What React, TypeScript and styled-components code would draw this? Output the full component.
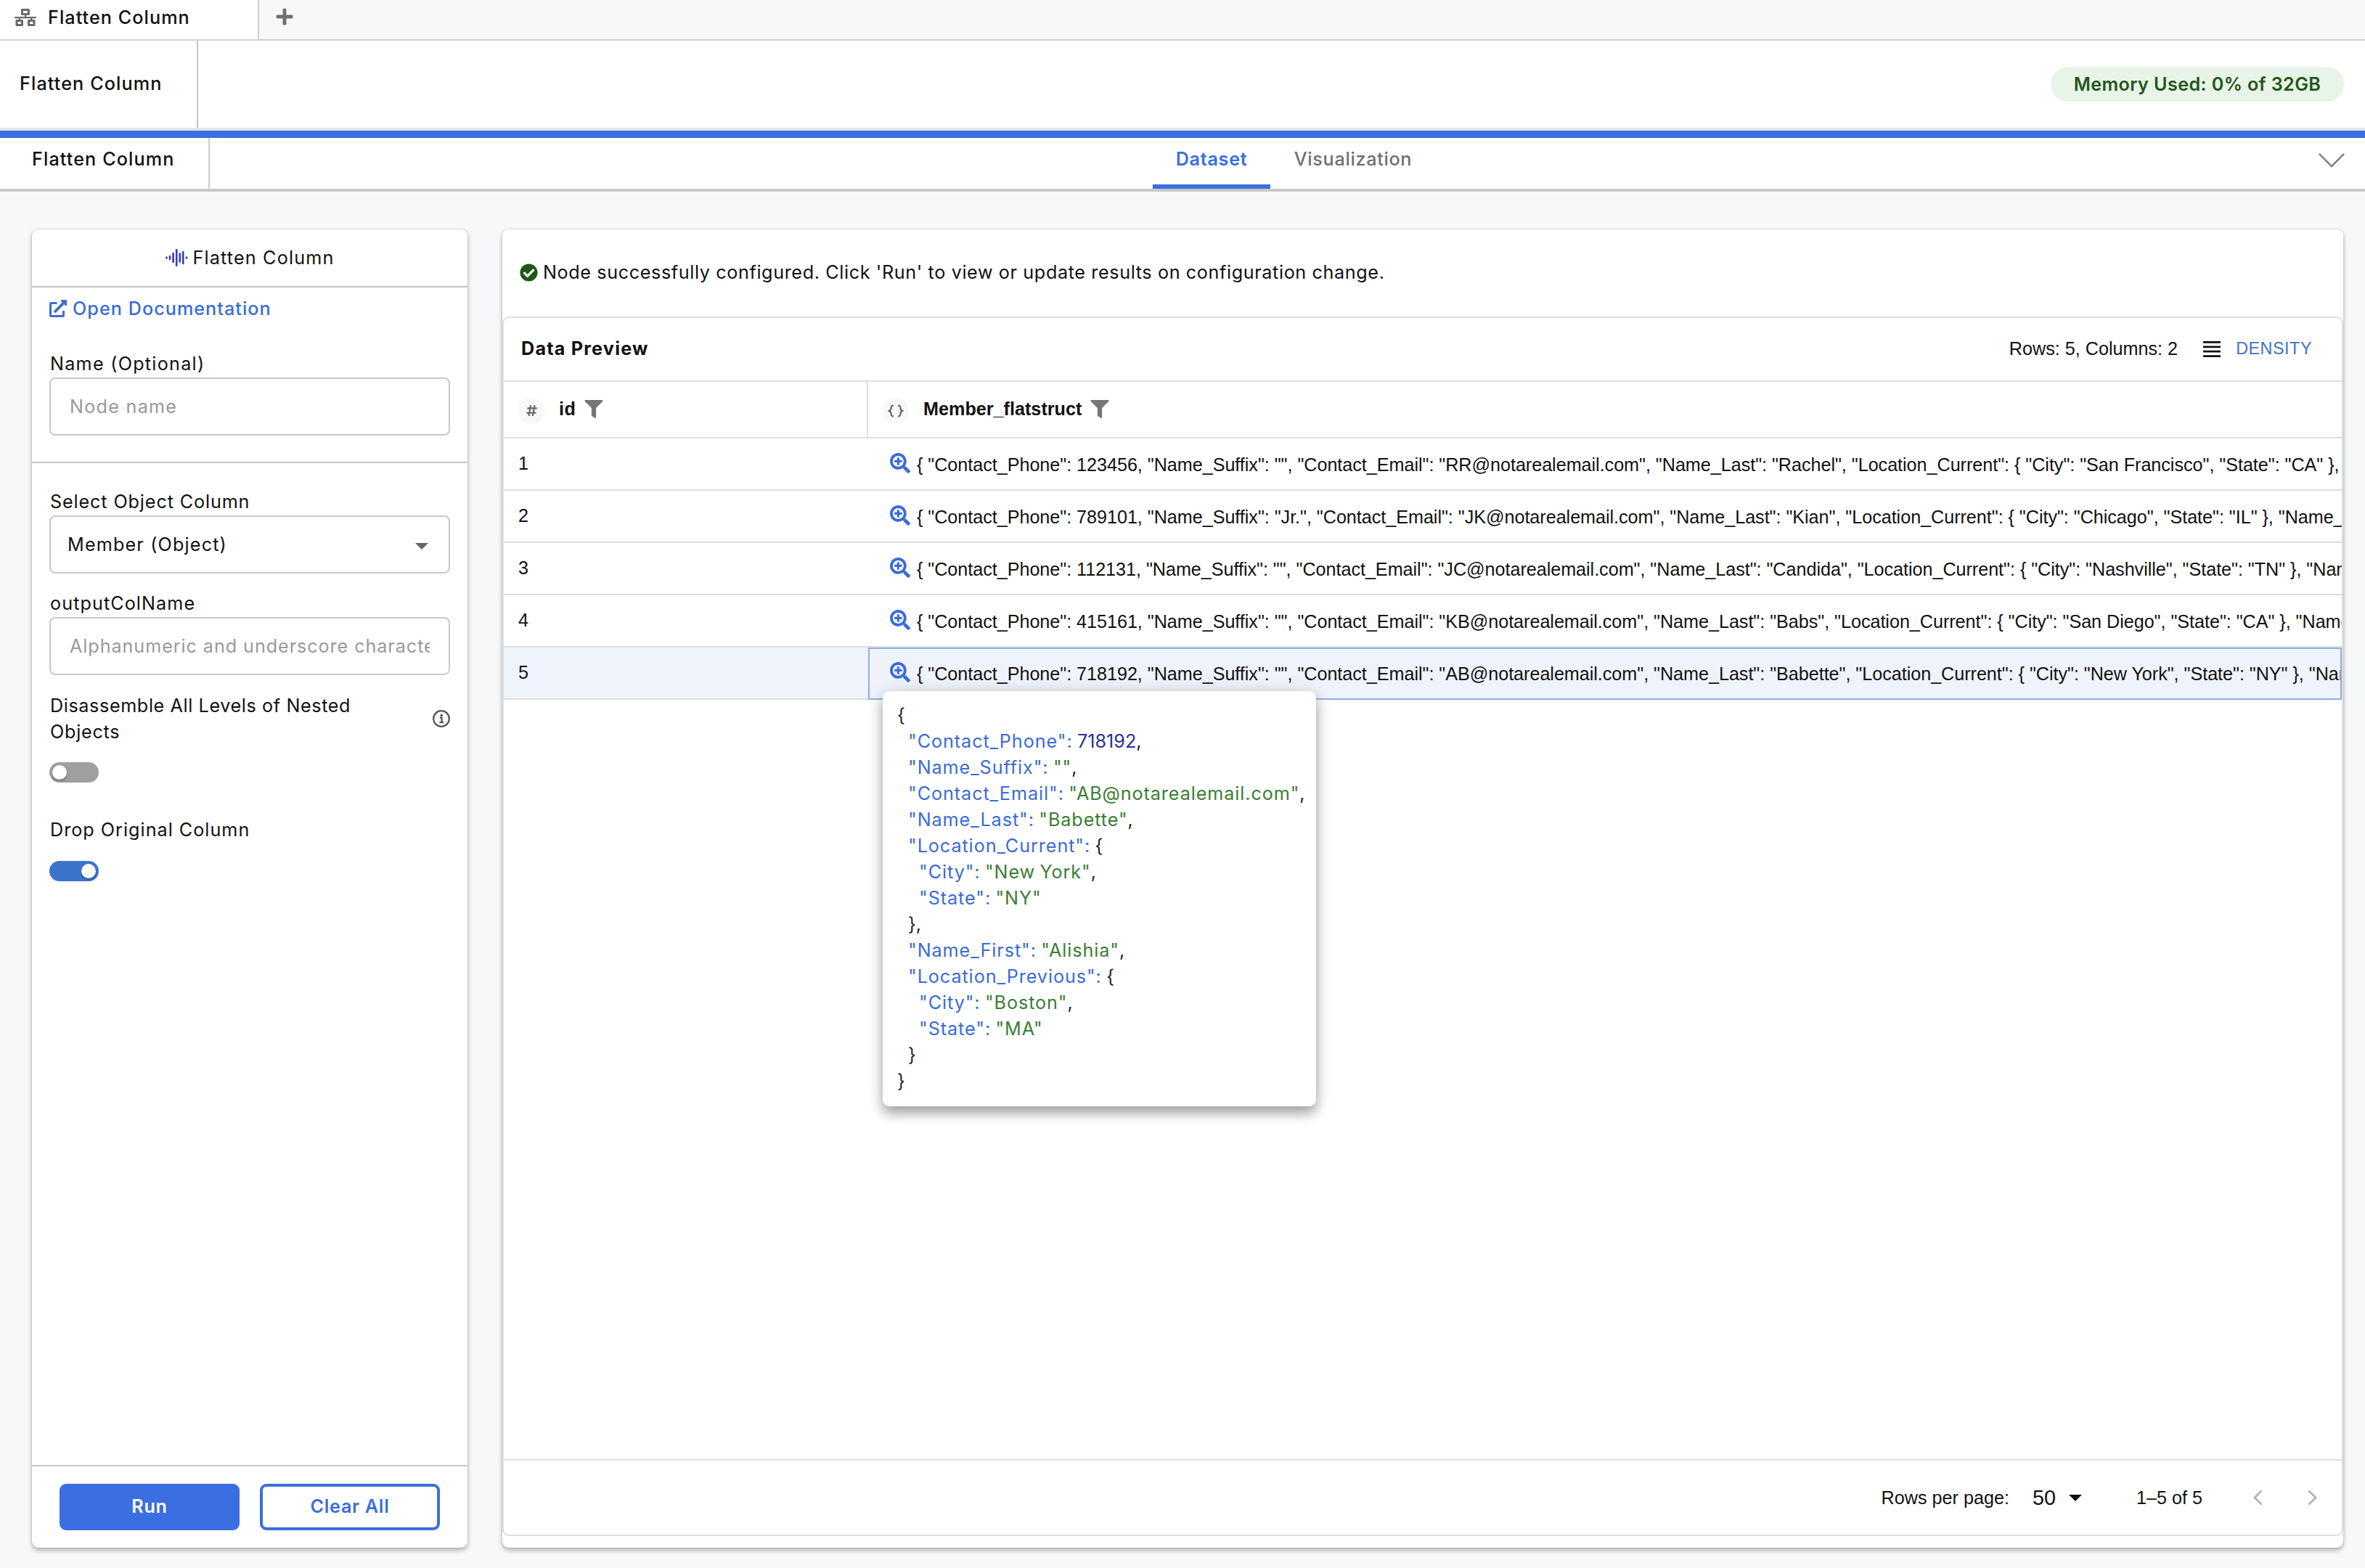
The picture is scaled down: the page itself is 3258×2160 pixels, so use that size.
import React from "react";
import styled, { createGlobalStyle, css } from "styled-components";
import {
  FaCheckCircle,
  FaExternalLinkAlt,
  FaFilter,
  FaHashtag,
  FaNetworkWired,
  FaPlus,
  FaSearchPlus,
} from "react-icons/fa";

const BRAND = "#3b6ee0";
const LINE = "#dedede";
const RULE = "#c4c4c4";

const uiFont = css`
  font-family: Inter, "Open Sans", sans-serif;
`;
const gridFont = css`
  font-family: "Liberation Sans", Arial, sans-serif;
`;

const GlobalStyle = createGlobalStyle`
  *, *::before, *::after { box-sizing: border-box; }
  body {
    margin: 0;
    background: #f6f8fa;
    color: #111;
    font-size: 25.2px;
    line-height: 36px;
    ${uiFont}
  }
`;

const Page = styled.div`
  display: flex;
  flex-direction: column;
  width: 3258px;
  height: 2160px;
  overflow: hidden;
`;

const Text = styled.span<{ $ls?: number; $weight?: number }>`
  font-weight: ${(p) => p.$weight ?? 400};
  letter-spacing: ${(p) => p.$ls ?? 0}px;
  white-space: nowrap;
`;

const WorkspaceTabs = styled.div`
  display: flex;
  height: 56px;
  border-bottom: 2px solid #cfcfd0;
`;
const WorkspaceTab = styled.div`
  display: flex;
  align-items: center;
  gap: 16px;
  width: 357px;
  padding: 0 0 7px 20px;
  background: #fff;
  border-right: 2px solid #cfcfcf;
  svg { color: #6b6b6b; width: 30px; height: 24px; }
`;
const AddTab = styled.button`
  display: flex;
  align-items: center;
  padding: 0 0 8px 21px;
  border: 0;
  background: none;
  color: #6f6f6f;
  svg { width: 28px; height: 26px; }
`;

const Header = styled.header`
  display: flex;
  align-items: center;
  justify-content: space-between;
  height: 124px;
  padding-right: 29px;
  background: #fff;
  border-bottom: 4px solid #e1e2e3;
`;
const HeaderTitle = styled.div`
  display: flex;
  align-items: center;
  width: 273px;
  height: 120px;
  padding: 0 0 2px 27px;
  border-right: 2px solid ${RULE};
`;
const MemoryPill = styled.div`
  display: flex;
  align-items: center;
  justify-content: center;
  width: 404px;
  height: 48px;
  padding-bottom: 1px;
  border-radius: 24px;
  background: #e8f4e7;
  color: #22561a;
`;

const SubHeader = styled.div`
  display: grid;
  grid-template-columns: 289px 1fr 64px;
  height: 84px;
  background: #fff;
  border-top: 10px solid ${BRAND};
  border-bottom: 4px solid #c9c9c9;
`;
const SubTitle = styled.div`
  display: flex;
  align-items: center;
  padding: 0 0 12px 44px;
  border-right: 2px solid #cfcfcf;
`;
const Tabs = styled.div`
  display: flex;
  padding-left: 1299px;
`;
const Tab = styled.div<{ $active?: boolean }>`
  display: flex;
  align-items: center;
  justify-content: center;
  width: ${(p) => (p.$active ? 162 : 228)}px;
  padding-bottom: ${(p) => (p.$active ? 6 : 12)}px;
  border-bottom: ${(p) => (p.$active ? `6px solid ${BRAND}` : "0")};
  color: ${(p) => (p.$active ? BRAND : "#6f6f6f")};
`;
const Collapse = styled.div`
  padding-top: 21px;
  svg { display: block; }
`;

const Main = styled.main`
  display: flex;
  flex: 1;
  gap: 48px;
  padding: 52px 30px 28px 44px;
`;
const Card = styled.section<{ $width?: number }>`
  display: flex;
  flex-direction: column;
  ${(p) => (p.$width ? `width: ${p.$width}px; flex: none;` : "flex: 1; min-width: 0;")}
  background: #fff;
  border-radius: 9px;
  box-shadow: 0 4px 6px rgba(0, 0, 0, 0.26), 0 0 4px rgba(0, 0, 0, 0.14);
`;

const PanelTitle = styled.div`
  display: flex;
  align-items: center;
  justify-content: center;
  gap: 7px;
  height: 80px;
  padding-bottom: 1px;
  border-bottom: 2px solid #c0c0c0;
`;
const PanelSection = styled.div<{ $top: number; $last?: boolean }>`
  display: flex;
  flex-direction: column;
  padding: ${(p) => p.$top}px 24px 36px;
  ${(p) => (p.$last ? "flex: 1;" : `border-bottom: 2px solid ${RULE};`)}
`;
const DocLink = styled.a`
  display: flex;
  align-items: center;
  gap: 8px;
  height: 36px;
  margin-bottom: 40px;
  color: #3b6cd4;
  svg { width: 24px; height: 24px; }
`;
const FieldLabel = styled.div<{ $top?: number; $bottom?: number }>`
  display: flex;
  align-items: center;
  justify-content: space-between;
  min-height: 36px;
  margin-top: ${(p) => p.$top ?? 0}px;
  margin-bottom: ${(p) => p.$bottom ?? 1}px;
  padding-left: 1px;
  svg { display: block; }
`;
const Field = styled.div<{ $inset?: number }>`
  display: flex;
  align-items: center;
  justify-content: space-between;
  height: 80px;
  padding: 0 26px 1px ${(p) => p.$inset ?? 26}px;
  border: 2px solid #c9c9c9;
  border-radius: 8px;
  svg { display: block; margin: 5px 2px 0 0; }
`;
const Placeholder = styled.div`
  overflow: hidden;
  color: #999;
`;
const Switch = styled.div<{ $on?: boolean }>`
  display: flex;
  align-items: center;
  justify-content: ${(p) => (p.$on ? "flex-end" : "flex-start")};
  width: 68px;
  height: 28px;
  padding: 4px;
  border-radius: 14px;
  background: ${(p) => (p.$on ? "#3b74cc" : "#9f9f9f")};
  &::after {
    content: "";
    width: 20px;
    height: 20px;
    border-radius: 50%;
    background: #fff;
    box-shadow: 0 2px 3px rgba(0, 0, 0, 0.3);
  }
`;
const PanelFooter = styled.div`
  display: flex;
  gap: 28px;
  height: 114px;
  padding: 24px 38px;
  border-top: 2px solid ${RULE};
`;
const Button = styled.button<{ $outline?: boolean }>`
  width: 248px;
  height: 64px;
  padding: 0 0 2px;
  border: 4px solid ${BRAND};
  border-radius: 9px;
  background: ${(p) => (p.$outline ? "#fff" : BRAND)};
  color: ${(p) => (p.$outline ? BRAND : "#fff")};
  font-size: 25.2px;
  ${uiFont}
`;

const Status = styled.div`
  display: flex;
  align-items: center;
  gap: 7px;
  height: 120px;
  padding: 0 24px 2px;
  svg { width: 25px; height: 25px; color: #22561a; }
`;
const Grid = styled.div`
  display: flex;
  flex-direction: column;
  height: 1680px;
  border: 2px solid ${LINE};
  border-radius: 9px;
`;
const GridToolbar = styled.div`
  display: flex;
  align-items: center;
  height: 88px;
  padding: 0 41px 2px 24px;
  border-bottom: 2px solid ${LINE};
`;
const GridInfo = styled.div`
  display: flex;
  align-items: center;
  margin-left: auto;
  ${gridFont}
  svg { margin: 2px 21px 0 35px; }
`;
const Density = styled.span`
  color: #3f72ca;
  font-size: 23.4px;
  letter-spacing: 0.5px;
`;
const GridRow = styled.div<{ $head?: boolean; $selected?: boolean }>`
  display: grid;
  grid-template-columns: 502px minmax(0, 1fr);
  height: ${(p) => (p.$head ? 78 : 72)}px;
  border-bottom: 2px solid ${LINE};
  background: ${(p) => (p.$selected ? "#eff3fb" : "transparent")};
  ${gridFont}
`;
const HeadCell = styled.div<{ $divider?: boolean }>`
  display: flex;
  align-items: center;
  gap: 20px;
  padding: 0 20px 2px;
  border-right: ${(p) => (p.$divider ? `2px solid ${LINE}` : "0")};
`;
const TypeBadge = styled.span`
  display: flex;
  align-items: center;
  justify-content: center;
  width: 36px;
  height: 36px;
  margin-top: 5px;
  border-radius: 50%;
  background: #f6f8f9;
  color: #666;
`;
const HeadLabel = styled.span`
  display: flex;
  align-items: center;
  gap: 12px;
  font-weight: 700;
  svg { width: 26px; height: 25px; color: #767676; }
`;
const IdCell = styled.div`
  padding: 16px 20px;
`;
const JsonCell = styled.div<{ $focus?: boolean }>`
  position: relative;
  display: flex;
  height: 72px;
  padding: 16px 0 0 28px;
  ${(p) => (p.$focus ? "border: 2px solid #93aee0; padding: 14px 0 0 26px;" : "")}
`;
const ZoomIcon = styled(FaSearchPlus)`
  flex: none;
  width: 28px;
  height: 28px;
  margin: 4px 9px 0 2px;
  color: #3b6cd9;
`;
const JsonText = styled.div`
  flex: 1;
  min-width: 0;
  height: 40px;
  overflow: hidden;
  line-height: 40px;
`;
const Popup = styled.pre`
  position: absolute;
  left: 18px;
  top: 58px;
  z-index: 2;
  width: 597px;
  height: 572px;
  margin: 0;
  padding: 15px 20px;
  border-radius: 9px;
  background: #fff;
  box-shadow: 0 10px 16px rgba(0, 0, 0, 0.3), 0 2px 26px rgba(0, 0, 0, 0.14);
  font-size: 25.2px;
  line-height: 36px;
  ${uiFont}
`;
const PopupLine = styled.div<{ $depth: number }>`
  height: 36px;
  padding-left: ${(p) => p.$depth * 15}px;
`;
const tokenColor = { key: "#3b6cd4", str: "#3b7d33", num: "#26309c", punct: "#222" };
const tokenSpacing = { key: 0.92, str: 0.9, num: 0, punct: 0 };
const Token = styled.span<{ $kind: keyof typeof tokenColor }>`
  color: ${(p) => tokenColor[p.$kind]};
  letter-spacing: ${(p) => tokenSpacing[p.$kind]}px;
  word-spacing: -1.6px;
`;
const Pagination = styled.div`
  display: flex;
  align-items: center;
  justify-content: flex-end;
  height: 104px;
  margin-top: auto;
  padding-right: 34px;
  border-top: 2px solid ${LINE};
  ${gridFont}
`;
const PageSize = styled.span`
  display: flex;
  align-items: center;
  gap: 18px;
  margin: 0 75px 0 32px;
  font-size: 28.8px;
`;
const Pager = styled.span`
  display: flex;
  gap: 62px;
  margin-left: 70px;
`;

const Caret = ({ color }: { color: string }) => (
  <svg width="18" height="9" viewBox="0 0 18 9">
    <path d="M0 0H18L9 9Z" fill={color} />
  </svg>
);
const PageArrow = ({ flip }: { flip?: boolean }) => (
  <svg width="13" height="22" viewBox="0 0 13 22" fill="none" stroke="#b3b3b3" strokeWidth="2.8">
    <path d={flip ? "M1.5 1.5L11 11L1.5 20.5" : "M11.5 1.5L2 11L11.5 20.5"} />
  </svg>
);
const WaveIcon = () => (
  <svg width="31" height="24" viewBox="0 0 31 24" stroke="#2f3fae" strokeWidth="2.6" strokeLinecap="round">
    <path d="M1.5 11.5V12.5M6 10V14M10.6 6V18M15.2 1.2V22.8M19.8 6.5V17.5M24.2 4V20M29 11.5V12.5" />
  </svg>
);
const InfoIcon = () => (
  <svg width="24" height="24" viewBox="0 0 24 24" fill="none" stroke="#555">
    <circle cx="12" cy="12" r="10.8" strokeWidth="2.2" />
    <path d="M9.8 10.6H12.6V17M9.4 17.2H15" strokeWidth="2.2" />
    <circle cx="12.2" cy="7.2" r="1.8" fill="#555" stroke="none" />
  </svg>
);
const BracesIcon = () => (
  <svg width="22" height="18" viewBox="0 0 22 18" fill="none" stroke="#666" strokeWidth="2.2">
    <path d="M8 1.5C5 1.5 4.6 2.5 4.6 4.5C4.6 7 4.4 8.2 1.8 9C4.4 9.8 4.6 11 4.6 13.5C4.6 15.5 5 16.5 8 16.5" />
    <path d="M14 1.5C17 1.5 17.4 2.5 17.4 4.5C17.4 7 17.6 8.2 20.2 9C17.6 9.8 17.4 11 17.4 13.5C17.4 15.5 17 16.5 14 16.5" />
  </svg>
);
const DensityIcon = () => (
  <svg width="24" height="22" viewBox="0 0 24 22" fill="#111">
    <path d="M0 0H24V2.8H0ZM0 6.4H24V9.2H0ZM0 12.8H24V15.6H0ZM0 19.2H24V22H0Z" />
  </svg>
);

const people = [
  { phone: "123456", suffix: "", email: "RR", last: "Rachel", city: "San Francisco", state: "CA" },
  { phone: "789101", suffix: "Jr.", email: "JK", last: "Kian", city: "Chicago", state: "IL" },
  { phone: "112131", suffix: "", email: "JC", last: "Candida", city: "Nashville", state: "TN" },
  { phone: "415161", suffix: "", email: "KB", last: "Babs", city: "San Diego", state: "CA" },
  { phone: "718192", suffix: "", email: "AB", last: "Babette", city: "New York", state: "NY" },
];

const toJson = (p: (typeof people)[number]) =>
  `{ "Contact_Phone": ${p.phone}, "Name_Suffix": "${p.suffix}", "Contact_Email": "${p.email}@notarealemail.com", "Name_Last": "${p.last}", "Location_Current": { "City": "${p.city}", "State": "${p.state}" }, "Name_First"`;

type Line = { depth: number; key?: string; str?: string; num?: string; punct?: string };
const popupLines: Line[] = [
  { depth: 0, punct: "{" },
  { depth: 1, key: "Contact_Phone", num: "718192", punct: "," },
  { depth: 1, key: "Name_Suffix", str: "", punct: "," },
  { depth: 1, key: "Contact_Email", str: "AB@notarealemail.com", punct: "," },
  { depth: 1, key: "Name_Last", str: "Babette", punct: "," },
  { depth: 1, key: "Location_Current", punct: "{" },
  { depth: 2, key: "City", str: "New York", punct: "," },
  { depth: 2, key: "State", str: "NY" },
  { depth: 1, punct: "}," },
  { depth: 1, key: "Name_First", str: "Alishia", punct: "," },
  { depth: 1, key: "Location_Previous", punct: "{" },
  { depth: 2, key: "City", str: "Boston", punct: "," },
  { depth: 2, key: "State", str: "MA" },
  { depth: 1, punct: "}" },
  { depth: 0, punct: "}" },
];

export default function App() {
  return (
    <Page>
      <GlobalStyle />
      <WorkspaceTabs>
        <WorkspaceTab>
          <FaNetworkWired />
          <Text $weight={500} $ls={1.05}>Flatten Column</Text>
        </WorkspaceTab>
        <AddTab><FaPlus /></AddTab>
      </WorkspaceTabs>
      <Header>
        <HeaderTitle><Text $weight={500} $ls={1.1}>Flatten Column</Text></HeaderTitle>
        <MemoryPill><Text $weight={600} $ls={0.38}>Memory Used: 0% of 32GB</Text></MemoryPill>
      </Header>
      <SubHeader>
        <SubTitle><Text $weight={500} $ls={1.1}>Flatten Column</Text></SubTitle>
        <Tabs>
          <Tab $active><Text $weight={600} $ls={0.7}>Dataset</Text></Tab>
          <Tab><Text $weight={500} $ls={0.68}>Visualization</Text></Tab>
        </Tabs>
        <Collapse>
          <svg width="36" height="20" viewBox="0 0 36 20" fill="none" stroke="#777" strokeWidth="2.4" strokeLinecap="round">
            <path d="M1.5 1.5L18 18L34.5 1.5" />
          </svg>
        </Collapse>
      </SubHeader>
      <Main>
        <Card $width={600}>
          <PanelTitle><WaveIcon /><Text $ls={1.15}>Flatten Column</Text></PanelTitle>
          <PanelSection $top={11}>
            <DocLink><FaExternalLinkAlt /><Text $weight={500} $ls={1.03}>Open Documentation</Text></DocLink>
            <FieldLabel><Text $ls={1.25}>Name (Optional)</Text></FieldLabel>
            <Field><Placeholder><Text $ls={1.25}>Node name</Text></Placeholder></Field>
          </PanelSection>
          <PanelSection $top={35} $last>
            <FieldLabel><Text $ls={0.87}>Select Object Column</Text></FieldLabel>
            <Field $inset={23}><Text $ls={1.15}>Member (Object)</Text><Caret color="#666" /></Field>
            <FieldLabel $top={23}><Text $ls={1.07}>outputColName</Text></FieldLabel>
            <Field><Placeholder><Text $ls={0.92}>Alphanumeric and underscore characters</Text></Placeholder></Field>
            <FieldLabel $top={24} $bottom={24}>
              <div><Text $ls={0.6}>Disassemble All Levels of Nested</Text><br /><Text $ls={0.75}>Objects</Text></div>
              <InfoIcon />
            </FieldLabel>
            <Switch />
            <FieldLabel $top={47} $bottom={25}><Text $ls={1}>Drop Original Column</Text></FieldLabel>
            <Switch $on />
          </PanelSection>
          <PanelFooter>
            <Button><Text $weight={600} $ls={0.8}>Run</Text></Button>
            <Button $outline><Text $weight={600} $ls={0.7}>Clear All</Text></Button>
          </PanelFooter>
        </Card>
        <Card>
          <Status>
            <FaCheckCircle />
            <Text $ls={0.61}>Node successfully configured. Click 'Run' to view or update results on configuration change.</Text>
          </Status>
          <Grid>
            <GridToolbar>
              <Text $weight={700} $ls={1.2}>Data Preview</Text>
              <GridInfo>
                <Text>Rows: 5, Columns: 2</Text>
                <DensityIcon />
                <Density>DENSITY</Density>
              </GridInfo>
            </GridToolbar>
            <GridRow $head>
              <HeadCell $divider>
                <TypeBadge><FaHashtag size={17} /></TypeBadge>
                <HeadLabel><Text $weight={700} $ls={0.4}>id</Text><FaFilter /></HeadLabel>
              </HeadCell>
              <HeadCell>
                <TypeBadge><BracesIcon /></TypeBadge>
                <HeadLabel><Text $weight={700}>Member_flatstruct</Text><FaFilter /></HeadLabel>
              </HeadCell>
            </GridRow>
            {people.map((p, i) => (
              <GridRow key={p.phone} $selected={i === 4}>
                <IdCell>{i + 1}</IdCell>
                <JsonCell $focus={i === 4}>
                  <ZoomIcon />
                  <JsonText><Text $ls={-0.045}>{toJson(p)}</Text></JsonText>
                  {i === 4 && (
                    <Popup>
                      {popupLines.map((l, n) => (
                        <PopupLine key={n} $depth={l.depth}>
                          {l.key !== undefined && <Token $kind="key">{`"${l.key}": `}</Token>}
                          {l.str !== undefined && <Token $kind="str">{`"${l.str}"`}</Token>}
                          {l.num !== undefined && <Token $kind="num">{l.num}</Token>}
                          {l.punct && <Token $kind="punct">{l.punct}</Token>}
                        </PopupLine>
                      ))}
                    </Popup>
                  )}
                </JsonCell>
              </GridRow>
            ))}
            <Pagination>
              <Text>Rows per page:</Text>
              <PageSize><Text>50</Text><Caret color="#111" /></PageSize>
              <Text>1–5 of 5</Text>
              <Pager><PageArrow /><PageArrow flip /></Pager>
            </Pagination>
          </Grid>
        </Card>
      </Main>
    </Page>
  );
}
